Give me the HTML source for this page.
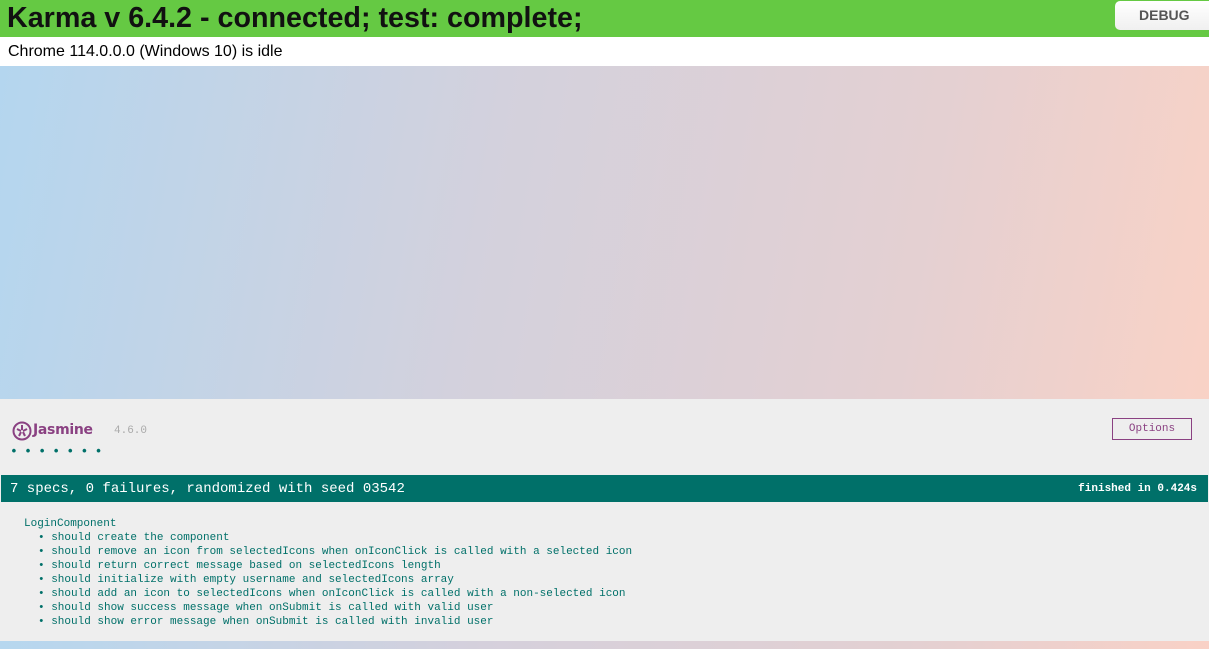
<!DOCTYPE html>
<html><head><style>
body{margin:0;width:1209px;height:649px;overflow:hidden;font-family:"Liberation Sans",sans-serif;background:linear-gradient(to right,#b6d7ef,#d5d0dc 40%,#e3d0d2 75%,#f9d1c6);position:relative}
#bar{position:absolute;left:0;top:0;width:1209px;height:37px;background:#65c943}
#bar h1{margin:0;position:absolute;left:7px;top:1px;font-size:28.7px;font-weight:bold;color:#111;line-height:34px}
#dbg{position:absolute;left:1115px;top:1px;width:100px;height:29px;background:linear-gradient(#fff,#f0f0f0);border-radius:5px;font-weight:bold;font-size:14px;color:#555;line-height:29px;text-indent:24px}
#st{position:absolute;top:37px;left:0;width:1209px;height:29px;background:#fff;font-size:16px;line-height:29px;text-indent:8px;color:#000}
#grad{position:absolute;top:66px;left:0;width:1209px;height:333px;background:linear-gradient(100deg,#b4d6ef,#d3d1dd 40%,#e4d0d2 75%,#f9d2c6)}
#jas{position:absolute;top:399px;left:0;width:1209px;height:242px;background:#eee;font-family:"Liberation Mono",monospace;font-size:11px}
#sum{position:absolute;top:76px;left:1px;width:1207px;height:27px;background:#007069;color:#fff;font-size:14px;line-height:27px}
#opt{position:absolute;left:1112px;top:19px;width:78px;height:20px;border:1px solid #8a4182;color:#8a4182;font-size:11px;line-height:20px;text-align:center}
ul{margin:0;padding:0;list-style:none}
</style></head><body>
<div id="grad"></div>
<div id="bar"><h1>Karma v 6.4.2 - connected; test: complete;</h1><div id="dbg">DEBUG</div></div>
<div id="st">Chrome 114.0.0.0 (Windows 10) is idle</div>
<div id="jas">
<svg style="position:absolute;left:12px;top:22px" width="20" height="20" viewBox="0 0 20 20"><circle cx="10" cy="10" r="8.5" fill="none" stroke="#8a4182" stroke-width="2"/><g stroke="#8a4182" stroke-width="2"><line x1="10" y1="4" x2="10" y2="9"/><line x1="15" y1="8" x2="11" y2="10"/><line x1="13" y1="15" x2="11" y2="11"/><line x1="7" y1="15" x2="9" y2="11"/><line x1="5" y1="8" x2="9" y2="10"/></g></svg>
<div style="position:absolute;left:33px;top:23px;font-family:'DejaVu Sans',sans-serif;font-weight:bold;font-size:14px;color:#8a4182;letter-spacing:-0.3px">Jasmine</div>
<div style="position:absolute;left:114px;top:26px;color:#aaa;font-size:11px">4.6.0</div>
<div style="position:absolute;left:10px;top:45px;color:#007069;font-size:13px;letter-spacing:6.3px;font-weight:bold">•••••••</div>
<div id="opt">Options</div>
<div id="sum"><span style="position:absolute;left:9px;top:1px">7 specs, 0 failures, randomized with seed 03542</span><span style="position:absolute;right:11px;top:1px;font-size:11px;font-weight:bold">finished in 0.424s</span></div>
<div style="position:absolute;left:24px;top:118px;color:#007069;line-height:14px">LoginComponent
<ul style="margin-left:14px">
<li>• should create the component</li>
<li>• should remove an icon from selectedIcons when onIconClick is called with a selected icon</li>
<li>• should return correct message based on selectedIcons length</li>
<li>• should initialize with empty username and selectedIcons array</li>
<li>• should add an icon to selectedIcons when onIconClick is called with a non-selected icon</li>
<li>• should show success message when onSubmit is called with valid user</li>
<li>• should show error message when onSubmit is called with invalid user</li>
</ul></div>
</div>
</body></html>
